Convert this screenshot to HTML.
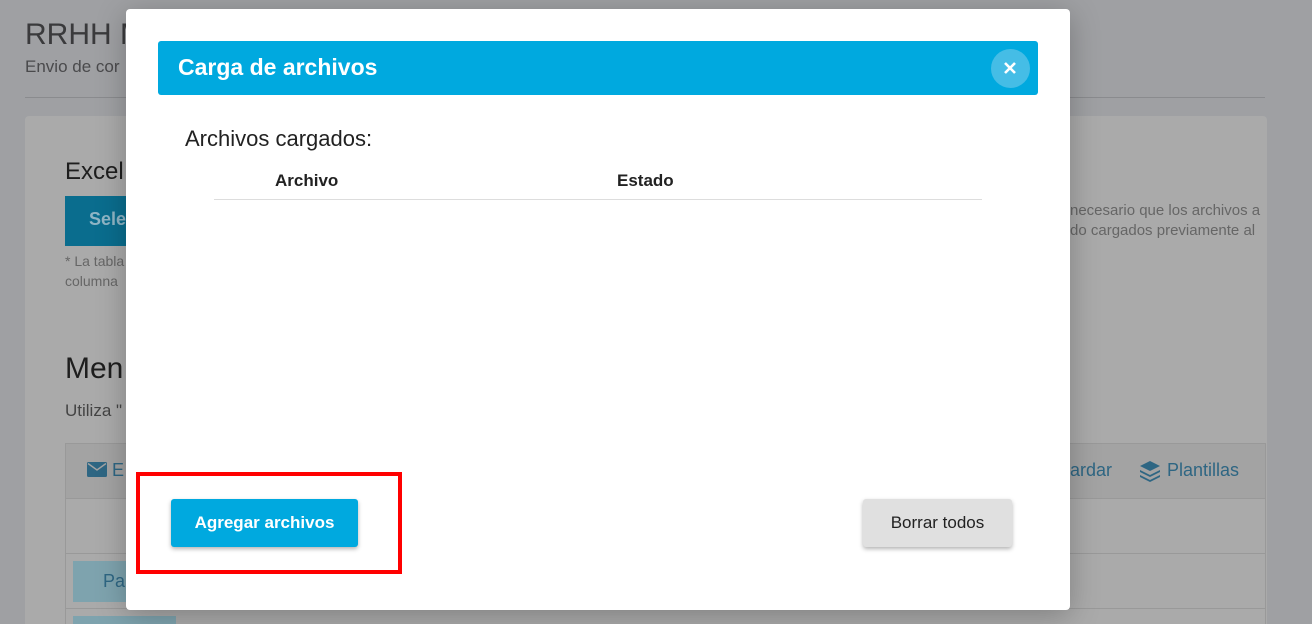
<!DOCTYPE html>
<html style="background:#9fa0a3;width:1312px;height:624px;overflow:hidden"><head><style>
*{margin:0;padding:0;box-sizing:border-box}
body{width:1312px;height:624px;overflow:hidden;position:relative;background:#9fa0a3;font-family:"Liberation Sans",sans-serif}
.a{position:absolute}
</style></head><body>
<div class="a" style="left:0;top:0;width:1312px;height:624px;background:#9fa0a3"></div>
<div class="a" style="left:25px;top:18px;font-size:30px;color:#3a3a3c">RRHH M</div>
<div class="a" style="left:25px;top:57px;font-size:17px;color:#4a4a4c">Envio de cor</div>
<div class="a" style="left:25px;top:97px;width:1240px;height:1px;background:#8a8b8e"></div>
<div class="a" style="left:25px;top:116px;width:1242px;height:508px;background:#aaaaaa;border-radius:4px 4px 0 0"></div>
<div class="a" style="left:65px;top:158px;font-size:24px;color:#1e1e1e">Excel</div>
<div class="a" style="left:65px;top:196px;width:70px;height:50px;background:#0a6d8e;color:#8fb5c5;font-weight:bold;font-size:18px;padding:13px 0 0 24px">Sele</div>
<div class="a" style="left:65px;top:251px;font-size:14px;line-height:20px;color:#666">* La tabla<br>columna</div>
<div class="a" style="left:1070px;top:201px;font-size:15px;line-height:20px;color:#666">necesario que los archivos a<br>do cargados previamente al</div>
<div class="a" style="left:65px;top:352px;font-size:30px;color:#1e1e1e">Men</div>
<div class="a" style="left:65px;top:401px;font-size:17px;color:#444">Utiliza "</div>
<div class="a" style="left:65px;top:443px;width:1201px;height:181px;border:1px solid #999;border-bottom:none"></div>
<div class="a" style="left:66px;top:444px;width:1199px;height:54px;background:#a3a3a3"></div>
<div class="a" style="left:66px;top:498px;width:1199px;height:1px;background:#999"></div>
<div class="a" style="left:66px;top:553px;width:1199px;height:1px;background:#999"></div>
<div class="a" style="left:66px;top:608px;width:1199px;height:1px;background:#999"></div>
<svg class="a" style="left:87px;top:462px" width="20" height="15" viewBox="0 0 20 15"><rect width="20" height="15" rx="1.5" fill="#2e6683"/><path d="M1 1.5 L10 8 L19 1.5" stroke="#a3a3a3" stroke-width="1.4" fill="none"/></svg>
<div class="a" style="left:112px;top:460px;font-size:18px;color:#2e6683">E</div>
<div class="a" style="left:1070px;top:460px;font-size:18px;color:#2e6683">ardar</div>
<svg class="a" style="left:1139px;top:460px" width="22" height="22" viewBox="0 0 22 22"><path d="M11 1 L21 6 L11 11 L1 6Z M1 10 L11 15 L21 10 L21 12 L11 17 L1 12Z M1 15 L11 20 L21 15 L21 17 L11 22 L1 17Z" fill="#2e6683"/></svg>
<div class="a" style="left:1167px;top:460px;font-size:18px;color:#2e6683">Plantillas</div>
<div class="a" style="left:73px;top:561px;width:103px;height:41px;background:#7ea3ae;color:#2e6683;font-size:18px;padding:10px 0 0 30px">Pa</div>
<div class="a" style="left:73px;top:616px;width:103px;height:8px;background:#7ea3ae"></div>

<div class="a" style="left:126px;top:9px;width:944px;height:601px;background:#fff;border-radius:4px;box-shadow:0 6px 30px rgba(0,0,0,.25)"></div>
<div class="a" style="left:158px;top:41px;width:880px;height:54px;background:#00a9df;border-radius:3px"></div>
<div class="a" style="left:178px;top:54px;font-size:23px;font-weight:bold;color:#fff">Carga de archivos</div>
<div class="a" style="left:991px;top:49px;width:39px;height:39px;border-radius:50%;background:#45bde6"></div>
<svg class="a" style="left:1003px;top:61px" width="14" height="14"><path d="M2 2L12 12M12 2L2 12" stroke="#fff" stroke-width="2.6"/></svg>
<div class="a" style="left:185px;top:126px;font-size:22px;color:#222">Archivos cargados:</div>
<div class="a" style="left:275px;top:171px;font-size:17px;font-weight:bold;color:#222">Archivo</div>
<div class="a" style="left:617px;top:171px;font-size:17px;font-weight:bold;color:#222">Estado</div>
<div class="a" style="left:214px;top:199px;width:768px;height:1px;background:#ddd"></div>
<div class="a" style="left:136px;top:472px;width:266px;height:102px;border:4px solid #f00"></div>
<div class="a" style="left:171px;top:499px;width:187px;height:48px;background:#00a9df;border-radius:3px;box-shadow:0 2px 4px rgba(0,0,0,.3);color:#fff;font-weight:bold;font-size:17px;text-align:center;line-height:48px">Agregar archivos</div>
<div class="a" style="left:863px;top:499px;width:149px;height:48px;background:#e0e0e0;border-radius:3px;box-shadow:0 2px 4px rgba(0,0,0,.3);color:#222;font-size:17px;text-align:center;line-height:48px">Borrar todos</div>
</body></html>
